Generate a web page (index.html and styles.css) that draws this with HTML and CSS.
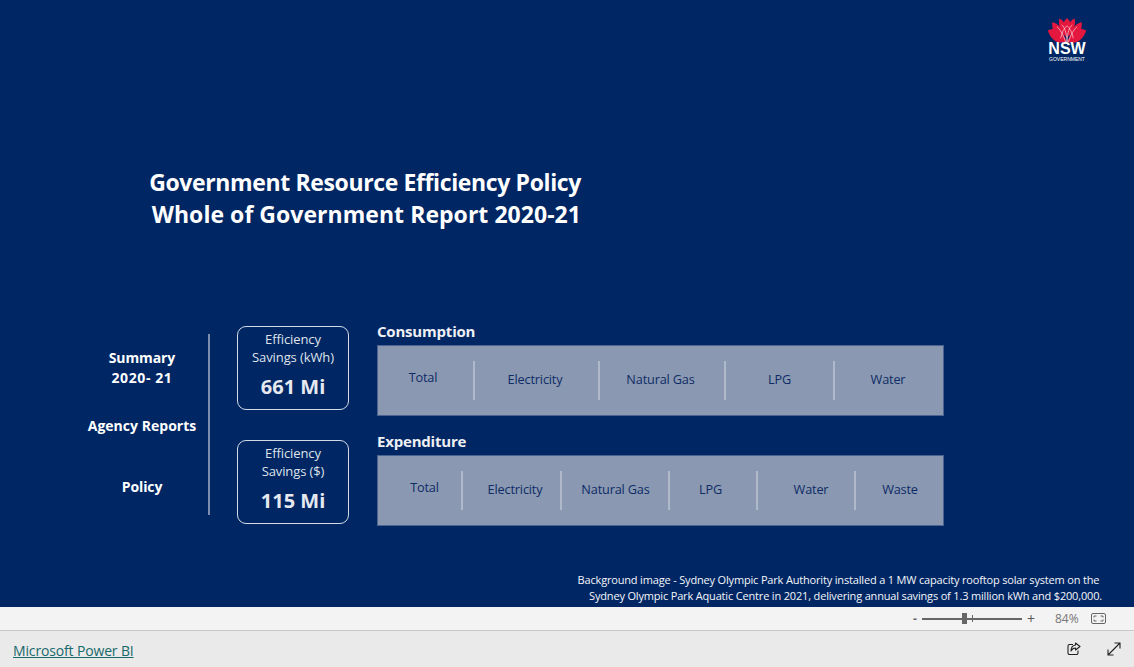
FILE: index.html
```html
<!DOCTYPE html>
<html lang="en">
<head>
<meta charset="utf-8">
<title>Government Resource Efficiency Policy</title>
<link rel="stylesheet" href="styles.css">
</head>
<body>
<main class="canvas">
  <header class="brand">
    <div class="logo">
      <svg class="waratah" viewBox="0 0 40 26" width="40" height="26" aria-hidden="true">
        <path d="M0 13 C5 10.500 9 11 12 14 L20 25.500 L11 25.500 C6 24 2 19 0 13Z" fill="#e4173e"/>
        <path d="M40 13 C35 10.500 31 11 28 14 L20 25.500 L29 25.500 C34 24 38 19 40 13Z" fill="#e4173e"/>
        <path d="M4.500 4.500 C8 5 11 7 13 10 L20 25 C13 22 8.500 20 6.500 15.500 C5 12 4.500 8 4.500 4.500Z" fill="#e4173e"/>
        <path d="M35.500 4.500 C32 5 29 7 27 10 L20 25 C27 22 31.500 20 33.500 15.500 C35 12 35.500 8 35.500 4.500Z" fill="#e4173e"/>
        <path d="M12 .5 C15.500 2 18 5 19 9 L20 20 L15 16 C12 11 11 5 12 .5Z" fill="#e4173e"/>
        <path d="M28 .5 C24.500 2 22 5 21 9 L20 20 L25 16 C28 11 29 5 28 .5Z" fill="#e4173e"/>
        <path d="M20 0 C23 3 25 6.500 24.500 10 L20 17 L15.500 10 C15 6.500 17 3 20 0Z" fill="#e4173e"/>
        <path d="M9.500 9 C13 12 16.500 18 18.500 25 M30.500 9 C27 12 23.500 18 21.500 25 M14.500 7 C17.500 10 19.500 14 20 25 M25.500 7 C22.500 10 20.500 14 20 25 M20 8 C17 10.500 14.500 15 13.500 21 M20 8 C23 10.500 25.500 15 26.500 21" fill="none" stroke="#ffd5dd" stroke-width=".7"/>
      </svg>
      <span class="logo-nsw">NSW</span>
      <span class="logo-gov">GOVERNMENT</span>
    </div>
  </header>

  <h1 class="title">Government Resource Efficiency Policy<br><span class="title-second">Whole of Government Report 2020-21</span></h1>

  <section class="dashboard">
    <nav class="side-nav">
      <a class="nav-item nav-summary">Summary<br><span class="nav-year">2020- 21</span></a>
      <a class="nav-item nav-agency">Agency Reports</a>
      <a class="nav-item nav-policy">Policy</a>
    </nav>
    <div class="rule"></div>
    <div class="cards">
      <article class="card">
        <p class="card-label">Efficiency<br>Savings (kWh)</p>
        <p class="card-value">661 Mi</p>
      </article>
      <article class="card">
        <p class="card-label">Efficiency<br>Savings ($)</p>
        <p class="card-value">115 Mi</p>
      </article>
    </div>
    <div class="groups">
      <section class="group">
        <h2 class="group-title">Consumption</h2>
        <div class="panel panel-consumption">
          <a class="cell cell-raised">Total</a>
          <a class="cell">Electricity</a>
          <a class="cell">Natural Gas</a>
          <a class="cell">LPG</a>
          <a class="cell">Water</a>
        </div>
      </section>
      <section class="group">
        <h2 class="group-title">Expenditure</h2>
        <div class="panel panel-expenditure">
          <a class="cell cell-raised cell-total-wide">Total</a>
          <a class="cell cell-nudge">Electricity</a>
          <a class="cell">Natural Gas</a>
          <a class="cell">LPG</a>
          <a class="cell cell-nudge-lg">Water</a>
          <a class="cell">Waste</a>
        </div>
      </section>
    </div>
  </section>

  <p class="caption">Background image - Sydney Olympic Park Authority installed a 1 MW capacity rooftop solar system on the&nbsp;<br>Sydney Olympic Park Aquatic Centre in 2021, delivering annual savings of 1.3 million kWh and $200,000.</p>
</main>

<div class="zoombar">
  <span class="zoom-minus">-</span>
  <div class="slider"><span class="slider-thumb"></span><span class="slider-tick"></span></div>
  <span class="zoom-plus">+</span>
  <span class="zoom-value">84%</span>
  <svg class="fit-icon" viewBox="0 0 15 11" width="15" height="11" aria-hidden="true">
    <rect x=".5" y=".5" width="14" height="10" rx="1.500" fill="none" stroke="#666"/>
    <path d="M3 4.500V3H5.500M9.500 3H12V4.500M12 6.500V8H9.500M5.500 8H3V6.500" fill="none" stroke="#666"/>
  </svg>
</div>

<footer class="footer">
  <a class="pbi-link" href="#">Microsoft Power BI</a>
  <div class="footer-actions">
    <svg viewBox="0 0 14 14" width="14" height="14" aria-hidden="true">
      <path d="M6 2.500H2.500A1.500 1.500 0 0 0 1 4V11A1.500 1.500 0 0 0 2.500 12.500H9.500A1.500 1.500 0 0 0 11 11V8.500" fill="none" stroke="#222" stroke-width="1.100"/>
      <path d="M8.500 1L13 4.500L8.500 8V6C6.500 6 5 7 4 9C4 6 5.500 3.500 8.500 3Z" fill="none" stroke="#222" stroke-width="1.100" stroke-linejoin="round"/>
    </svg>
    <svg viewBox="0 0 14 14" width="14" height="14" aria-hidden="true">
      <path d="M1 13L13 1M7.500 1H13V6.500M1 7.500V13H6.500" fill="none" stroke="#222" stroke-width="1.100"/>
    </svg>
  </div>
</footer>
</body>
</html>
```

FILE: styles.css
```css
* { box-sizing: border-box; }

html, body {
  margin: 0;
  height: 667px;
  overflow: hidden;
  font-family: "Open Sans", "Noto Sans", "Liberation Sans", sans-serif;
}

.canvas {
  height: 607px;
  background: #002664;
  color: #fff;
  display: flex;
  flex-direction: column;
}

.brand {
  display: flex;
  justify-content: flex-end;
  padding: 18px 47px 0 0;
  height: 62px;
}

.logo {
  width: 40px;
  display: flex;
  flex-direction: column;
  align-items: center;
}

.waratah { display: block; }

.logo-nsw {
  font-family: "Liberation Sans", sans-serif;
  font-weight: 700;
  font-size: 16px;
  line-height: 12px;
}

.logo-gov {
  font-family: "Liberation Sans", sans-serif;
  font-size: 5px;
  line-height: 6px;
  white-space: nowrap;
  margin-top: 1px;
}

.title {
  margin: 104px 0 0;
  width: 581px;
  text-align: right;
  font-size: 23px;
  line-height: 32px;
  font-weight: 700;
  letter-spacing: -.37px;
}

.title-second { letter-spacing: .04px; }

.dashboard {
  display: flex;
  margin-top: 96px;
  padding-left: 76px;
}

.side-nav {
  width: 132px;
  display: flex;
  flex-direction: column;
  align-items: center;
  text-align: center;
  font-size: 14px;
  font-weight: 700;
  line-height: 20px;
  letter-spacing: -.1px;
  padding-top: 22px;
}

.nav-year { letter-spacing: .6px; }
.nav-agency { margin-top: 28px; letter-spacing: .02px; }
.nav-policy { margin-top: 41px; }

.rule {
  width: 2px;
  height: 181px;
  margin-top: 8px;
  background: #7d8db0;
}

.cards {
  margin-left: 27px;
  width: 112px;
  display: flex;
  flex-direction: column;
  gap: 30px;
}

.card {
  height: 84px;
  border: 1px solid #d5dbe6;
  border-radius: 9px;
  text-align: center;
  padding-top: 3px;
}

.card-label {
  margin: 0;
  font-size: 13px;
  line-height: 18px;
  letter-spacing: -.1px;
  color: #dfe3ea;
}

.card-value {
  margin: 7px 0 0;
  font-size: 20px;
  line-height: 28px;
  font-weight: 700;
  color: #e6e9ef;
}

.groups {
  margin-left: 28px;
  width: 567px;
  display: flex;
  flex-direction: column;
  gap: 20px;
}

.group-title {
  margin: 0;
  height: 19px;
  font-size: 15px;
  line-height: 11px;
  font-weight: 700;
  letter-spacing: -.2px;
  color: #eef0f4;
}

.panel {
  height: 71px;
  display: grid;
  align-items: center;
  background: #8a98b1;
  border: 1px solid #4b6390;
  color: #0e2c66;
  font-size: 12.700px;
  letter-spacing: -.15px;
}

.panel-consumption { grid-template-columns: 97px 125px 126px 109px 1fr; }
.panel-expenditure { grid-template-columns: 85px 99px 108px 88px 98px 1fr; }

.cell {
  height: 39px;
  line-height: 37px;
  text-align: center;
  border-right: 2px solid #b0b9ca;
}

.cell:last-child { border-right: 0; }
.cell-raised { line-height: 33px; padding-right: 5px; }
.cell-total-wide { padding-right: 0; padding-left: 10px; }
.cell-nudge { padding-left: 7px; }
.cell-nudge-lg { padding-left: 10px; }
.panel-consumption .cell:nth-child(2),
.panel-consumption .cell:nth-child(3) { padding-right: 3px; }
.panel-consumption .cell:nth-child(5) { padding-right: 2px; }
.panel-expenditure .cell:nth-child(3) { padding-left: 1px; }
.panel-expenditure .cell:nth-child(4) { padding-right: 5px; }
.panel-expenditure .cell:nth-child(6) { padding-left: 1px; }

.caption {
  margin: auto 32px 3px 0;
  text-align: right;
  font-size: 11px;
  line-height: 16px;
  letter-spacing: -.17px;
  color: #f4f6fa;
}

.zoombar {
  height: 24px;
  background: #f3f3f3;
  border-bottom: 1px solid #c8c8c8;
  display: flex;
  align-items: center;
  padding-left: 913px;
  color: #666;
  font-size: 12px;
}

.zoom-minus { width: 9px; font-weight: 700; }

.slider {
  width: 100px;
  height: 2px;
  background: #666;
  position: relative;
}

.slider-thumb {
  position: absolute;
  left: 40px;
  top: -5px;
  width: 5px;
  height: 11px;
  background: #666;
}

.slider-tick {
  position: absolute;
  left: 50px;
  top: -3px;
  width: 1px;
  height: 7px;
  background: #666;
}

.zoom-plus { margin-left: 5px; width: 16px; font-size: 14px; color: #555; }
.zoom-value { margin-left: 12px; width: 33px; font-size: 12px; color: #777; }
.fit-icon { margin-left: 3px; }

.footer {
  height: 36px;
  background: #eaeaea;
  display: flex;
  align-items: center;
  justify-content: space-between;
  padding: 0 13px;
}

.pbi-link {
  color: #17696b;
  font-size: 14px;
  line-height: 22px;
  margin-top: 4px;
  letter-spacing: -.15px;
  text-decoration: underline;
}

.footer-actions {
  display: flex;
  gap: 26px;
}
```
